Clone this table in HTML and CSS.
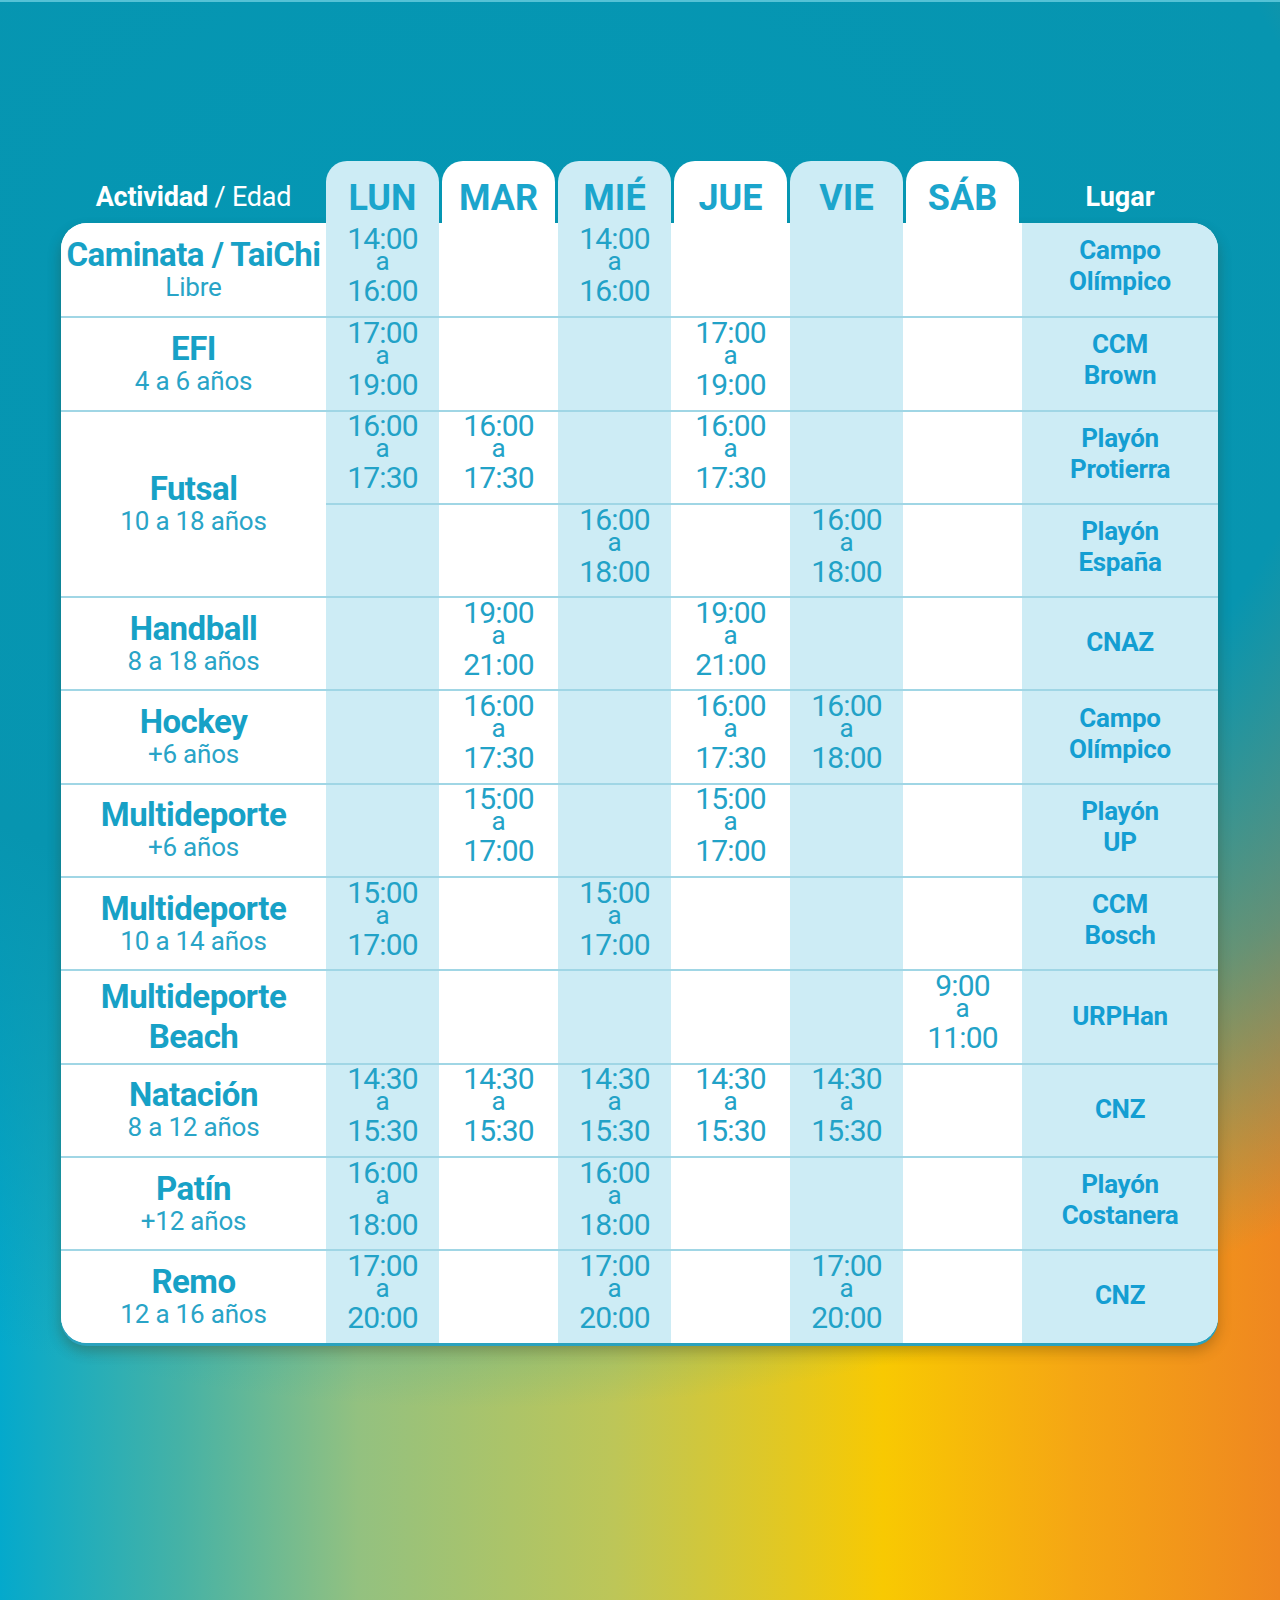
FILE: index.html
```html
<!DOCTYPE html>
<html lang="es">
<head>
<meta charset="utf-8">
<title>Actividades</title>
<link rel="stylesheet" href="styles.css">
</head>
<body>
<main class="page">
  <div class="head">
    <div class="head-act"><b>Actividad</b> / Edad</div>
    <div class="tab tab-light">LUN</div>
    <div class="tab tab-white">MAR</div>
    <div class="tab tab-light">MIÉ</div>
    <div class="tab tab-white">JUE</div>
    <div class="tab tab-light">VIE</div>
    <div class="tab tab-white">SÁB</div>
    <div class="head-place">Lugar</div>
  </div>

  <div class="card">
    <!-- 1 -->
    <div class="act first corner-tl"><span class="name">Caminata / TaiChi</span><span class="age">Libre</span></div>
    <div class="cell light first"><span class="t">14:00</span><span class="a">a</span><span class="t">16:00</span></div>
    <div class="cell first"></div>
    <div class="cell light first"><span class="t">14:00</span><span class="a">a</span><span class="t">16:00</span></div>
    <div class="cell first"></div>
    <div class="cell light first"></div>
    <div class="cell first"></div>
    <div class="place first corner-tr">Campo<br>Olímpico</div>
    <!-- 2 -->
    <div class="act"><span class="name">EFI</span><span class="age">4 a 6 años</span></div>
    <div class="cell light"><span class="t">17:00</span><span class="a">a</span><span class="t">19:00</span></div>
    <div class="cell"></div>
    <div class="cell light"></div>
    <div class="cell"><span class="t">17:00</span><span class="a">a</span><span class="t">19:00</span></div>
    <div class="cell light"></div>
    <div class="cell"></div>
    <div class="place">CCM<br>Brown</div>
    <!-- 3 -->
    <div class="act span2"><span class="name">Futsal</span><span class="age">10 a 18 años</span></div>
    <div class="cell light"><span class="t">16:00</span><span class="a">a</span><span class="t">17:30</span></div>
    <div class="cell"><span class="t">16:00</span><span class="a">a</span><span class="t">17:30</span></div>
    <div class="cell light"></div>
    <div class="cell"><span class="t">16:00</span><span class="a">a</span><span class="t">17:30</span></div>
    <div class="cell light"></div>
    <div class="cell"></div>
    <div class="place">Playón<br>Protierra</div>
    <!-- 4 -->
    <div class="cell light"></div>
    <div class="cell"></div>
    <div class="cell light"><span class="t">16:00</span><span class="a">a</span><span class="t">18:00</span></div>
    <div class="cell"></div>
    <div class="cell light"><span class="t">16:00</span><span class="a">a</span><span class="t">18:00</span></div>
    <div class="cell"></div>
    <div class="place">Playón<br>España</div>
    <!-- 5 -->
    <div class="act"><span class="name">Handball</span><span class="age">8 a 18 años</span></div>
    <div class="cell light"></div>
    <div class="cell"><span class="t">19:00</span><span class="a">a</span><span class="t">21:00</span></div>
    <div class="cell light"></div>
    <div class="cell"><span class="t">19:00</span><span class="a">a</span><span class="t">21:00</span></div>
    <div class="cell light"></div>
    <div class="cell"></div>
    <div class="place single">CNAZ</div>
    <!-- 6 -->
    <div class="act"><span class="name">Hockey</span><span class="age">+6 años</span></div>
    <div class="cell light"></div>
    <div class="cell"><span class="t">16:00</span><span class="a">a</span><span class="t">17:30</span></div>
    <div class="cell light"></div>
    <div class="cell"><span class="t">16:00</span><span class="a">a</span><span class="t">17:30</span></div>
    <div class="cell light"><span class="t">16:00</span><span class="a">a</span><span class="t">18:00</span></div>
    <div class="cell"></div>
    <div class="place">Campo<br>Olímpico</div>
    <!-- 7 -->
    <div class="act"><span class="name">Multideporte</span><span class="age">+6 años</span></div>
    <div class="cell light"></div>
    <div class="cell"><span class="t">15:00</span><span class="a">a</span><span class="t">17:00</span></div>
    <div class="cell light"></div>
    <div class="cell"><span class="t">15:00</span><span class="a">a</span><span class="t">17:00</span></div>
    <div class="cell light"></div>
    <div class="cell"></div>
    <div class="place">Playón<br>UP</div>
    <!-- 8 -->
    <div class="act"><span class="name">Multideporte</span><span class="age">10 a 14 años</span></div>
    <div class="cell light"><span class="t">15:00</span><span class="a">a</span><span class="t">17:00</span></div>
    <div class="cell"></div>
    <div class="cell light"><span class="t">15:00</span><span class="a">a</span><span class="t">17:00</span></div>
    <div class="cell"></div>
    <div class="cell light"></div>
    <div class="cell"></div>
    <div class="place">CCM<br>Bosch</div>
    <!-- 9 -->
    <div class="act"><span class="name two">Multideporte<br>Beach</span></div>
    <div class="cell light"></div>
    <div class="cell"></div>
    <div class="cell light"></div>
    <div class="cell"></div>
    <div class="cell light"></div>
    <div class="cell"><span class="t">9:00</span><span class="a">a</span><span class="t">11:00</span></div>
    <div class="place single">URPHan</div>
    <!-- 10 -->
    <div class="act"><span class="name">Natación</span><span class="age">8 a 12 años</span></div>
    <div class="cell light"><span class="t">14:30</span><span class="a">a</span><span class="t">15:30</span></div>
    <div class="cell"><span class="t">14:30</span><span class="a">a</span><span class="t">15:30</span></div>
    <div class="cell light"><span class="t">14:30</span><span class="a">a</span><span class="t">15:30</span></div>
    <div class="cell"><span class="t">14:30</span><span class="a">a</span><span class="t">15:30</span></div>
    <div class="cell light"><span class="t">14:30</span><span class="a">a</span><span class="t">15:30</span></div>
    <div class="cell"></div>
    <div class="place single">CNZ</div>
    <!-- 11 -->
    <div class="act"><span class="name">Patín</span><span class="age">+12 años</span></div>
    <div class="cell light"><span class="t">16:00</span><span class="a">a</span><span class="t">18:00</span></div>
    <div class="cell"></div>
    <div class="cell light"><span class="t">16:00</span><span class="a">a</span><span class="t">18:00</span></div>
    <div class="cell"></div>
    <div class="cell light"></div>
    <div class="cell"></div>
    <div class="place">Playón<br>Costanera</div>
    <!-- 12 -->
    <div class="act corner-bl"><span class="name">Remo</span><span class="age">12 a 16 años</span></div>
    <div class="cell light"><span class="t">17:00</span><span class="a">a</span><span class="t">20:00</span></div>
    <div class="cell"></div>
    <div class="cell light"><span class="t">17:00</span><span class="a">a</span><span class="t">20:00</span></div>
    <div class="cell"></div>
    <div class="cell light"><span class="t">17:00</span><span class="a">a</span><span class="t">20:00</span></div>
    <div class="cell"></div>
    <div class="place single corner-br">CNZ</div>
  </div>
</main>
</body>
</html>
```
FILE: styles.css
```css
* { box-sizing: border-box; }
html, body { margin: 0; padding: 0; }
body {
  width: 1280px;
  height: 1600px;
  font-family: Roboto, "Liberation Sans", sans-serif;
  border-top: 2px solid #55c2d6;
  background:
    radial-gradient(ellipse 115% 70% at 38% 18%, #0497b4 0%, #0795b0 58%, rgba(8,150,176,0.6) 78%, rgba(8,150,176,0) 100%),
    linear-gradient(90deg, #04a9cc 0%, #45b2a6 14%, #93c180 28%, #bdc658 48%, #f8c902 69%, #f5a614 84%, #ef8720 100%);
  overflow: hidden;
}
.page {
  padding: 159px 62px 0 61px;
}
.head {
  display: grid;
  grid-template-columns: 265px 113px 119px 113px 119px 113px 119px 1fr;
  height: 62px;
  align-items: end;
}
.head-act, .head-place {
  color: #fff;
  font-size: 27px;
  line-height: 1;
  text-align: center;
  align-self: start;
  padding-top: 23px;
}
.head-act b, .head-place { font-weight: 700; }
.head-act { font-weight: 400; letter-spacing: -0.2px; }
.tab {
  height: 62px;
  border-radius: 21px 21px 0 0;
  text-align: center;
  font-size: 36px;
  font-weight: 700;
  color: #1ba5cc;
  padding-top: 19px;
  line-height: 1;
}
.tab-light { background: #cdecf5; }
.tab-white { background: #fff; margin: 0 3px; }

.card {
  display: grid;
  grid-template-columns: 265px 113px 119px 113px 119px 113px 119px 1fr;
  grid-template-rows: repeat(12, 93.3px);
  background: #fff;
  border-radius: 26px;
  box-shadow: 0 3px 0 #2aa2bd, 0 8px 14px rgba(60, 40, 0, 0.3);
}
.card > div {
  border-top: 2px solid #a0d6e5;
  display: flex;
  flex-direction: column;
  align-items: center;
  justify-content: center;
  text-align: center;
}
.card > .first { border-top: 0; }
.card > .corner-tl { border-top-left-radius: 26px; }
.card > .corner-tr { border-top-right-radius: 26px; }
.card > .corner-bl { border-bottom-left-radius: 26px; }
.card > .corner-br { border-bottom-right-radius: 26px; }
.cell { background: #fff; padding-bottom: 11px; }
.cell.light { background: #cdecf5; }
.cell .t {
  font-size: 30px;
  line-height: 29px;
  color: #22a2c7;
  letter-spacing: -0.8px;
}
.cell .a {
  font-size: 26px;
  line-height: 23px;
  color: #22a2c7;
  margin-top: -3px;
  margin-bottom: 3px;
}
.act { background: #fff; }
.act.span2 { grid-row: span 2; }
.act .name {
  font-size: 33px;
  font-weight: 700;
  color: #17a1c6;
  line-height: 35px;
  letter-spacing: -0.5px;
}
.act .name.two { line-height: 40px; }
.act .age {
  font-size: 26px;
  color: #29a4c7;
  line-height: 31px;
  letter-spacing: -0.2px;
}
.place {
  background: #cdecf5;
  font-size: 26px;
  font-weight: 700;
  line-height: 31px;
  color: #149ed2;
  letter-spacing: -0.3px;
  padding-bottom: 7px;
}
.place.single { padding-bottom: 2px; }
```
